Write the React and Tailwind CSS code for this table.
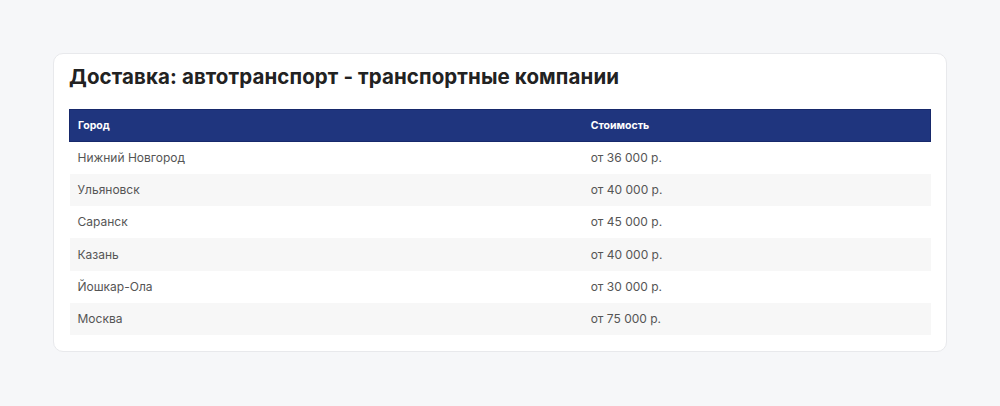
const rows = [
  ['Нижний Новгород', 'от 36 000 р.'],
  ['Ульяновск', 'от 40 000 р.'],
  ['Саранск', 'от 45 000 р.'],
  ['Казань', 'от 40 000 р.'],
  ['Йошкар-Ола', 'от 30 000 р.'],
  ['Москва', 'от 75 000 р.'],
];

export default function App() {
  return (
    <div className="min-h-[406px] bg-[#f6f7f9] px-[53px] pt-[53px] font-['Inter',sans-serif]">
      <div className="rounded-[10px] border border-[#e8e9ec] bg-white px-[15px] pt-[10px] pb-[16px]">
        <h2 className="text-[20.5px] font-bold leading-[26px] tracking-[0.1px] text-[#222]">
          Доставка: автотранспорт - транспортные компании
        </h2>
        <table className="mt-[19px] w-full border-collapse text-left">
          <thead>
            <tr className="h-[32px] bg-[#1f357e]">
              <th className="w-[59.6%] border-y border-l border-[#17296b] pl-[8px] text-[10.5px] font-bold text-white">Город</th>
              <th className="border-y border-r border-[#17296b] pl-[8px] text-[10.5px] font-bold text-white">Стоимость</th>
            </tr>
          </thead>
          <tbody>
            {rows.map(([city, price], i) => (
              <tr key={city} className={`h-[32.3px] ${i % 2 ? 'bg-[#f7f7f7]' : 'bg-white'}`}>
                <td className="pl-[8px] text-[12px] text-[#555]">{city}</td>
                <td className="pl-[8px] text-[12px] text-[#555]">{price}</td>
              </tr>
            ))}
          </tbody>
        </table>
      </div>
    </div>
  );
}
